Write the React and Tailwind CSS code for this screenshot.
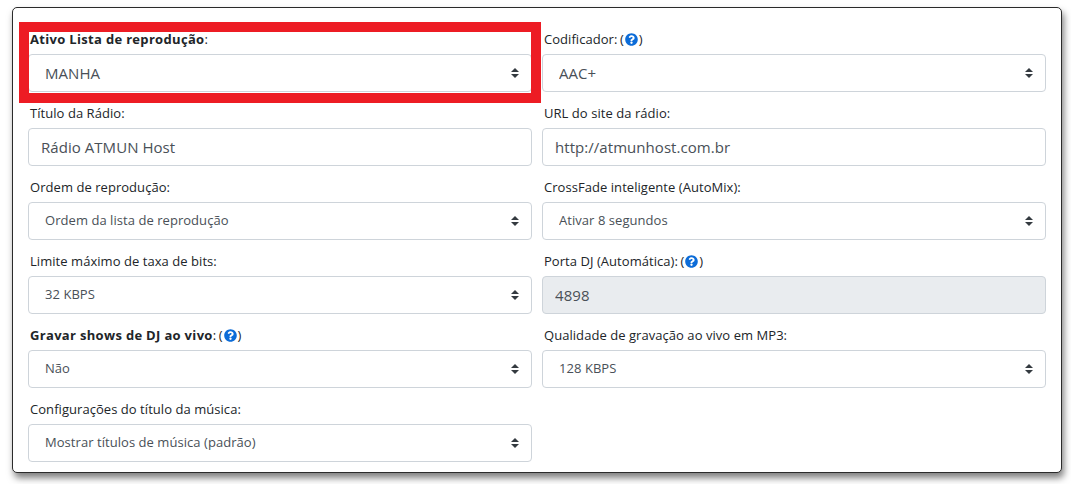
import { FaQuestionCircle } from 'react-icons/fa'

function Help() {
  return (
    <span className="inline-flex items-center align-top h-[20px] ml-[-1px]">
      (<FaQuestionCircle size={13} className="text-[#0c6cd8] mx-px" />)
    </span>
  )
}

function Field({ label, children }) {
  return (
    <div className="flex flex-col">
      <label className="h-[20px] mb-[5px] pl-[2px] text-[13px] leading-[20px] text-[#212529] whitespace-nowrap">{label}</label>
      {children}
    </div>
  )
}

function Select({ value, big }) {
  return (
    <div className="relative">
      <select
        defaultValue={value}
        className={`w-full h-[38px] appearance-none bg-white border border-[#ced4da] rounded-[4px] pl-4 pr-8 text-[#495057] outline-none ${big ? 'text-[15px]' : 'text-[13px]'}`}
      >
        <option>{value}</option>
      </select>
      <svg width="8" height="10" viewBox="0 0 8 10" className="absolute right-[13px] top-[14px] pointer-events-none">
        <path d="M4 0 L8 4 H0 Z M0 6 H8 L4 10 Z" fill="#343a40" />
      </svg>
    </div>
  )
}

function Input({ value, disabled }) {
  return (
    <input
      defaultValue={value}
      disabled={disabled}
      className={`w-full h-[38px] border border-[#ced4da] rounded-[4px] px-3 text-[15px] text-[#495057] outline-none ${disabled ? 'bg-[#e9ecef]' : 'bg-white'}`}
    />
  )
}

export default function App() {
  return (
    <div className="w-[1071px] h-[484px] bg-white font-['Open_Sans',sans-serif] pt-[7px] pl-[12px]">
      <div className="relative w-[1050px] h-[466px] bg-white border border-[#2b2b2b] rounded-[5px] shadow-[2px_5px_7px_rgba(0,0,0,0.5)] pt-[21px] px-[15px]">
        <div className="grid grid-cols-[504px_504px] gap-x-[10px] gap-y-[11px] tracking-[0.05px]">
          <Field label={<><b className="font-bold tracking-[0.32px]">Ativo Lista de reprodução</b>:</>}>
            <Select value="MANHA" big />
          </Field>
          <Field label={<>Codificador: <Help /></>}>
            <Select value="AAC+" big />
          </Field>
          <Field label="Título da Rádio:">
            <Input value="Rádio ATMUN Host" />
          </Field>
          <Field label="URL do site da rádio:">
            <Input value="http://atmunhost.com.br" />
          </Field>
          <Field label="Ordem de reprodução:">
            <Select value="Ordem da lista de reprodução" />
          </Field>
          <Field label="CrossFade inteligente (AutoMix):">
            <Select value="Ativar 8 segundos" />
          </Field>
          <Field label="Limite máximo de taxa de bits:">
            <Select value="32 KBPS" />
          </Field>
          <Field label={<>Porta DJ (Automática): <Help /></>}>
            <Input value="4898" disabled />
          </Field>
          <Field label={<><b className="font-bold tracking-[0.32px]">Gravar shows de DJ ao vivo</b>: <Help /></>}>
            <Select value="Não" />
          </Field>
          <Field label="Qualidade de gravação ao vivo em MP3:">
            <Select value="128 KBPS" />
          </Field>
          <Field label="Configurações do título da música:">
            <Select value="Mostrar títulos de música (padrão)" />
          </Field>
        </div>
        {/* red highlight drawn over the first field */}
        <div className="absolute left-[6px] top-[14px] w-[522px] h-[81px] border-[10px] border-[#ed1c24] pointer-events-none" />
      </div>
    </div>
  )
}
